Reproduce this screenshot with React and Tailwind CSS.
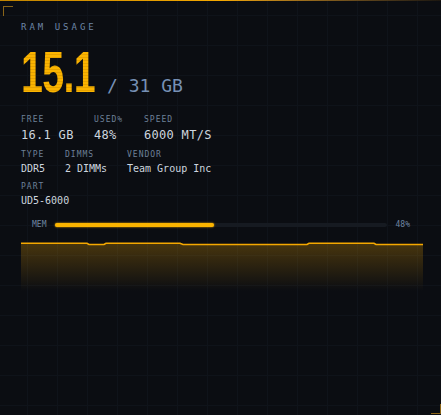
import React from 'react';

const stats = [
  {
    label: 'FREE',
    value: '16.1 GB',
    w: 'w-[73px]',
  },
  { label: 'USED%', value: '48%', w: 'w-[50px]' },
  { label: 'SPEED', value: '6000 MT/S', w: '' },
];

const specs = [
  { label: 'TYPE', value: 'DDR5', w: 'w-[44px]' },
  { label: 'DIMMS', value: '2 DIMMs', w: 'w-[62px]' },
  { label: 'VENDOR', value: 'Team Group Inc', w: '' },
];

// memory history line, y in svg units (0 = top of chart)
const linePath =
  'M0 2.3 L66 2.3 L68 3.5 L83 3.5 L85 2.3 L159 2.3 L162 3.5 L286 3.5 L288 2.3 L353 2.3 L355 3.5 L402 3.5';

const Label = ({ children }) => (
  <div className="text-[8px] leading-none tracking-[1px] text-[#6d8098]">{children}</div>
);

export default function App() {
  return (
    <div className="relative w-[441px] h-[415px] overflow-hidden bg-[#0b0d12] bg-[linear-gradient(to_right,#0f131a_1px,transparent_1px),linear-gradient(to_bottom,#0f131a_1px,transparent_1px)] bg-[size:30px_30px] bg-[position:27px_15px] font-['DejaVu_Sans_Mono',monospace]">
      {/* top accent line */}
      <div className="absolute top-0 left-0 right-0 h-px bg-linear-to-r from-[#c08400] via-[#f5a800] to-[#1c1710]" />
      {/* corner brackets */}
      <div className="absolute left-[3px] top-[6px] w-[10px] h-[10px] border-l border-t border-[#8a6418]" />
      <div className="absolute right-0 bottom-[1px] w-[10px] h-[10px] border-r border-b border-[#8a6418]" />

      <div className="relative pl-[21px] pr-[18px] pt-[23px]">
        <div className="text-[9px] leading-none tracking-[3px] text-[#6d86a6]">RAM USAGE</div>

        <div className="mt-[11px] flex items-baseline">
          <span className="w-[77px] inline-block">
            <span className="inline-block origin-left scale-x-[0.68] font-['Liberation_Sans',sans-serif] font-bold text-[58px] leading-none tracking-[-1px] bg-[repeating-linear-gradient(180deg,#fbb400_0px,#fbb400_2px,#e6a200_2px,#e6a200_3px)] bg-clip-text text-transparent">
              15.1
            </span>
          </span>
          <span className="ml-[9px] text-[18px] leading-none text-[#7690b5]">/ 31 GB</span>
        </div>

        <div className="mt-[15px] flex">
          {stats.map((s) => (
            <div key={s.label} className={s.w}>
              <Label>{s.label}</Label>
              <div className="mt-[5px] text-[12px] leading-none tracking-[0.3px] text-[#cdd5df]">{s.value}</div>
            </div>
          ))}
        </div>

        <div className="mt-[10px] flex">
          {specs.map((s) => (
            <div key={s.label} className={s.w}>
              <Label>{s.label}</Label>
              <div className="mt-[5px] text-[10px] leading-none text-[#cdd5df]">{s.value}</div>
            </div>
          ))}
        </div>

        <div className="mt-[9px]">
          <Label>PART</Label>
          <div className="mt-[5px] text-[10px] leading-none text-[#cdd5df]">UD5-6000</div>
        </div>

        {/* usage bar */}
        <div className="mt-[15px] pl-[11px] pr-[13px] flex items-center gap-[9px] text-[8px] leading-none text-[#6f86a3]">
          <span>MEM</span>
          <div className="flex-1 h-[4px] rounded-full bg-[#161a21]">
            <div className="h-full w-[48%] rounded-full bg-[#fbb400] shadow-[0_0_2px_#fbb400]" />
          </div>
          <span>48%</span>
        </div>

        {/* history chart */}
        <svg className="mt-[12px] block" width="402" height="50" viewBox="0 0 402 50">
          <defs>
            <linearGradient id="memFill" x1="0" y1="0" x2="0" y2="1">
              <stop offset="0%" stopColor="#f5a800" stopOpacity="0.26" />
              <stop offset="100%" stopColor="#f5a800" stopOpacity="0" />
            </linearGradient>
          </defs>
          <path d={`${linePath} L402 50 L0 50 Z`} fill="url(#memFill)" />
          <path d={linePath} fill="none" stroke="#f5a800" strokeWidth="1.5" />
        </svg>
      </div>
    </div>
  );
}
